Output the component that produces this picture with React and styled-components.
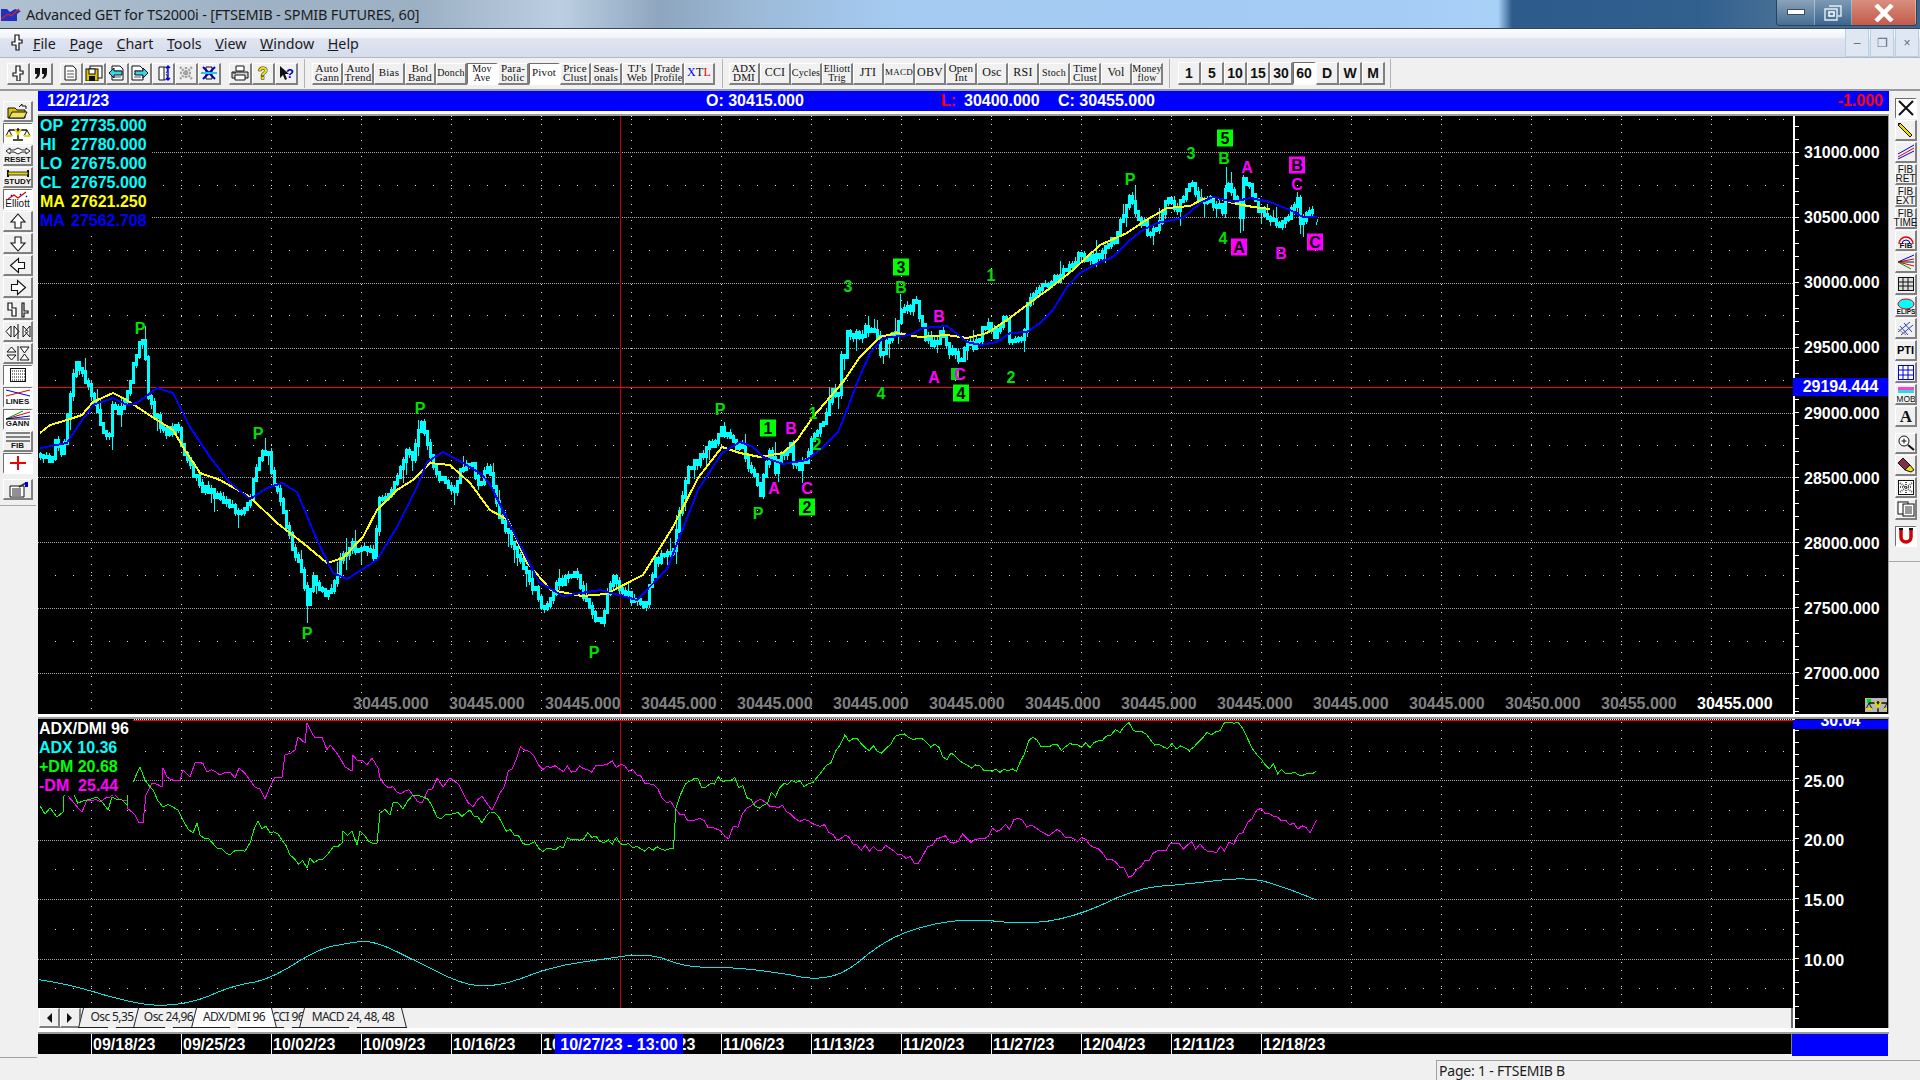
import React from "react";
import styled, { createGlobalStyle } from "styled-components";

const GlobalStyle = createGlobalStyle`
  html, body {
    margin: 0;
    padding: 0;
    background: #f0f0f0;
  }
`;

// ---- chart data, page coordinates ----
const K = 1.2245;
const up = pts => pts.map(([x, y]) => [x * K, y * K]);

const PRICE = [
  [40, 455], [50, 462], [55, 445], [62, 455], [65, 440], [67, 413], [72, 390], [74, 367], [80, 365], [85, 377],
  [90, 393], [96, 410], [103, 430], [108, 440], [112, 410], [122, 412], [127, 393], [133, 363], [140, 343], [144, 340],
  [146, 377], [148, 393], [152, 410], [163, 430], [178, 428], [183, 453], [193, 473], [200, 490], [217, 493], [230, 503],
  [240, 513], [250, 500], [257, 463], [263, 447], [268, 457], [273, 480], [280, 497], [285, 527], [293, 547], [300, 570],
  [307, 600], [312, 580], [320, 587], [327, 597], [335, 580], [343, 553], [352, 543], [358, 553], [367, 547], [373, 557],
  [379, 500], [393, 487], [400, 467], [408, 447], [413, 457], [418, 427], [423, 423], [428, 450], [438, 480], [450, 487],
  [453, 497], [460, 473], [470, 460], [480, 487], [487, 463], [502, 526], [514, 545], [527, 575], [545, 612], [557, 582],
  [575, 575], [588, 606], [600, 624], [612, 575], [630, 600], [645, 606], [655, 563], [673, 551], [686, 471], [704, 453],
  [722, 429], [735, 443], [742, 447], [747, 467], [753, 470], [760, 497], [763, 480], [770, 450], [775, 470], [780, 453],
  [790, 447], [793, 460], [800, 467], [808, 457], [812, 437], [815, 427], [822, 430], [827, 410], [830, 390], [838, 392],
  [840, 357], [845, 358], [847, 330], [855, 337], [865, 330], [875, 333], [882, 360], [885, 340], [895, 337], [900, 315],
  [912, 305], [917, 303], [920, 320], [925, 337], [933, 347], [940, 333], [947, 347], [960, 360], [967, 347], [973, 347],
  [988, 320], [993, 337], [1005, 317], [1010, 343], [1022, 343], [1027, 303], [1033, 297], [1047, 283], [1062, 277], [1067, 263],
  [1080, 257], [1093, 260], [1100, 257], [1113, 240], [1118, 227], [1123, 217], [1130, 197], [1135, 210], [1143, 223], [1150, 237],
  [1158, 230], [1167, 197], [1177, 207], [1187, 193], [1190, 182], [1197, 197], [1207, 200], [1217, 203], [1223, 213], [1226, 180],
  [1237, 200], [1240, 217], [1243, 183], [1248, 185], [1255, 203], [1262, 217], [1273, 220], [1282, 225], [1290, 213], [1297, 203],
  [1300, 223], [1307, 217], [1313, 208],
];

const YELLOW = [
  [40, 433], [50, 425], [67, 420], [82, 415], [93, 402], [113, 393], [127, 400], [137, 407], [157, 420], [173, 430],
  [183, 447], [200, 473], [220, 480], [250, 497], [277, 523], [303, 543], [327, 563], [343, 558], [363, 537], [377, 510],
  [397, 490], [413, 480], [430, 463], [450, 465], [470, 483], [490, 510], [508, 520], [527, 563], [551, 590], [582, 596],
  [606, 594], [643, 575], [673, 527], [698, 478], [722, 447], [740, 453], [760, 457], [783, 453], [797, 440], [813, 417],
  [830, 397], [843, 382], [860, 357], [880, 337], [897, 333], [920, 337], [947, 335], [967, 338], [987, 333], [1007, 320],
  [1027, 305], [1050, 288], [1073, 270], [1100, 245], [1127, 233], [1143, 222], [1167, 208], [1190, 206], [1203, 199], [1217, 198],
  [1233, 203], [1253, 207], [1270, 209],
];

const BLUE = [
  [40, 448], [67, 443], [80, 423], [93, 405], [113, 398], [127, 405], [137, 403], [157, 388], [173, 393], [190, 427],
  [210, 457], [230, 483], [250, 499], [267, 488], [282, 483], [297, 492], [317, 540], [333, 573], [347, 579], [377, 560],
  [397, 527], [417, 487], [427, 462], [443, 452], [463, 463], [480, 473], [490, 484], [514, 533], [539, 582], [563, 596],
  [600, 590], [637, 600], [667, 569], [698, 490], [722, 453], [740, 442], [753, 447], [763, 457], [783, 464], [807, 460],
  [823, 447], [838, 432], [847, 410], [857, 383], [870, 353], [883, 338], [910, 335], [923, 328], [947, 326], [967, 342],
  [980, 345], [997, 342], [1010, 333], [1027, 332], [1040, 323], [1053, 310], [1067, 287], [1080, 273], [1100, 262], [1113, 257],
  [1130, 240], [1143, 230], [1157, 223], [1183, 218], [1200, 203], [1213, 197], [1233, 202], [1250, 198], [1270, 202], [1290, 210],
  [1303, 217], [1317, 217],
];

const PLUS_DM = [
  [40, 806], [45, 814], [50, 808], [57, 817], [63, 812], [64, 796], [87, 800], [97, 797], [108, 810], [112, 797], [127, 805],
  [127, 797], [133, 782], [140, 767], [145, 780], [153, 790], [163, 807], [173, 807], [183, 820], [193, 833], [197, 823],
  [200, 835], [217, 848], [230, 855], [240, 850], [250, 843], [258, 821], [270, 833], [282, 840], [290, 855], [307, 868],
  [310, 858], [322, 860], [333, 847], [342, 843], [343, 831], [352, 831], [357, 845], [360, 831], [377, 843], [380, 813],
  [390, 815], [393, 803], [403, 809], [413, 795], [423, 797], [437, 817], [450, 815], [470, 810], [482, 823], [490, 812],
  [502, 823],
  ...up([
    [420, 682], [430, 690], [450, 693], [480, 680], [510, 690], [550, 693], [552, 660], [560, 640], [580, 640], [600, 635],
    [620, 660], [640, 640], [660, 640], [675, 625], [690, 600], [720, 615], [735, 600], [760, 610], [790, 625], [830, 630],
    [840, 605], [870, 610], [900, 605], [922, 590], [950, 610], [975, 610], [1000, 590], [1015, 595], [1030, 620], [1050, 632],
    [1075, 630],
  ]),
];

const MINUS_DM = [
  [68, 796], [82, 812], [87, 800], [110, 797], [127, 800], [127, 808], [143, 823], [146, 795], [152, 783], [162, 787],
  [163, 768], [167, 777], [180, 780], [183, 770], [190, 777], [195, 763], [199, 762], [207, 772], [220, 775], [230, 772],
  [235, 778], [239, 768], [250, 780], [265, 799], [270, 787], [275, 777], [282, 777], [285, 755], [295, 750], [298, 737],
  [305, 743], [307, 723], [315, 738], [322, 737], [327, 750], [330, 745], [340, 758], [345, 767], [352, 771], [353, 755],
  [362, 760], [367, 765], [372, 758], [378, 768], [380, 778], [397, 792], [413, 795], [422, 803], [428, 790], [437, 778],
  [443, 787], [450, 778], [463, 793], [473, 807], [482, 796], [492, 810], [500, 793],
  ...up([
    [425, 610], [440, 625], [470, 630], [490, 625], [510, 625], [530, 640], [555, 665], [575, 670], [595, 685], [610, 660],
    [625, 655], [660, 670], [700, 690], [730, 695], [750, 705], [765, 685], [800, 685], [835, 670], [860, 680], [890, 690],
    [925, 715], [945, 695], [970, 690], [1000, 695], [1015, 680], [1030, 660], [1050, 670], [1070, 680], [1075, 670],
  ]),
];

const ADX = up([
  [32, 800], [60, 805], [100, 817], [130, 822], [160, 818], [190, 805], [220, 800], [260, 775], [285, 770], [305, 768],
  [340, 785], [380, 805], [410, 805], [450, 790], [480, 785], [530, 778], [560, 790], [600, 790], [640, 795], [665, 800],
  [690, 795], [720, 770], [750, 757], [790, 750], [840, 755], [880, 748], [930, 725], [970, 722], [1020, 716], [1050, 725],
  [1075, 735],
]);

function seeded(a) {
  return () => {
    a = (a + 0x6d2b79f5) | 0;
    let t = Math.imul(a ^ (a >>> 15), 1 | a);
    t = (t + Math.imul(t ^ (t >>> 7), 61 | t)) ^ t;
    return ((t ^ (t >>> 14)) >>> 0) / 4294967296;
  };
}

const line = pts => "M" + pts.map(([x, y]) => `${x.toFixed(1)} ${y.toFixed(1)}`).join("L");

function interp(pts, x) {
  for (let i = 1; i < pts.length; i++) {
    if (x <= pts[i][0]) {
      const [x0, y0] = pts[i - 1];
      const [x1, y1] = pts[i];
      return y0 + ((y1 - y0) * (x - x0)) / Math.max(x1 - x0, 0.01);
    }
  }
  return pts[pts.length - 1][1];
}

function roughen(pts, seed) {
  const rnd = seeded(seed);
  const out = [];
  pts.forEach((p, i) => {
    out.push(p);
    const next = pts[i + 1];
    if (!next) return;
    const n = Math.floor((next[0] - p[0]) / 4);
    for (let k = 1; k < n; k++) {
      const t = k / n;
      out.push([p[0] + (next[0] - p[0]) * t, p[1] + (next[1] - p[1]) * t + (rnd() - 0.5) * 10]);
    }
  });
  return out;
}

function chaikin(pts) {
  const out = [pts[0]];
  for (let i = 0; i < pts.length - 1; i++) {
    const [a, b] = [pts[i], pts[i + 1]];
    out.push([a[0] * 0.75 + b[0] * 0.25, a[1] * 0.75 + b[1] * 0.25]);
    out.push([a[0] * 0.25 + b[0] * 0.75, a[1] * 0.25 + b[1] * 0.75]);
  }
  out.push(pts[pts.length - 1]);
  return out;
}

function buildBars() {
  const rnd = seeded(42);
  let wicks = "";
  let bodies = "";
  let prev = interp(PRICE, 40);
  for (let x = 40; x < 1315; x += 3) {
    const c = interp(PRICE, x) + (rnd() - 0.5) * 9;
    const top = Math.min(prev, c);
    const bot = Math.max(prev, c);
    const hi = top - rnd() * 6 - (rnd() > 0.9 ? 10 : 0);
    const lo = bot + rnd() * 6 + (rnd() > 0.9 ? 10 : 0);
    wicks += `M${x.toFixed(1)} ${hi.toFixed(1)}V${lo.toFixed(1)}`;
    bodies += `M${x.toFixed(1)} ${(top - 2).toFixed(1)}V${(bot + 2).toFixed(1)}`;
    prev = c;
  }
  // the long tails that stand out in the picture
  wicks += "M307 597V623M1226 167V205M1240 217V233M900 294V320M145 326V345M1297 192V212M1316 225L1318 219";
  return { wicks, bodies };
}

const BARS = buildBars();
const GREEN_PATH = line(roughen(PLUS_DM, 7));
const MAGENTA_PATH = line(roughen(MINUS_DM, 11));
const ADX_PATH = line(chaikin(chaikin(ADX)));
const VERTICALS = Array.from({ length: 19 }, (_, i) => 91 + i * 90);

const PRICE_LINES = [152, 217, 283, 348, 413, 477, 542, 608, 673];
const PRICE_ROWS = [119, 185, 250, 315, 380, 445, 510, 575, 641];
const ADX_LINES = [780, 840, 899, 959];
const ADX_ROWS = [751, 810, 869, 929, 988];

const MARKS = [
  [140, 328, "P"], [258, 433, "P"], [307, 633, "P"], [420, 408, "P"], [594, 652, "P"], [720, 409, "P"], [758, 513, "P"],
  [813, 413, "1"], [817, 444, "2"], [848, 286, "3"], [881, 393, "4"], [901, 287, "B"], [991, 275, "1"], [1011, 377, "2"],
  [1130, 179, "P"], [1191, 153, "3"], [1224, 158, "B"], [1223, 238, "4"],
];
const PINK_MARKS = [
  [791, 428, "B"], [774, 488, "A"], [807, 488, "C"], [939, 316, "B"], [934, 377, "A"], [1247, 167, "A"], [1297, 184, "C"], [1281, 253, "B"],
];
const BOXES = [
  [768, 428, "1", "#00ff00"], [807, 507, "2", "#00ff00"], [901, 267, "3", "#00ff00"], [961, 393, "4", "#00ff00"], [1225, 138, "5", "#00ff00"],
  [1297, 165, "B", "#ff00ff"], [1239, 247, "A", "#ff00ff"], [1315, 242, "C", "#ff00ff"],
];

// ---- shell ----
const Frame = styled.div`
  width: 1920px;
  height: 1080px;
  overflow: hidden;
  display: flex;
  flex-direction: column;
  background: #f0f0f0;
  font-family: "Noto Sans", "Liberation Sans", sans-serif;
  color: #1c1c1c;
`;

const TitleBar = styled.div`
  height: 29px;
  box-sizing: border-box;
  flex: none;
  display: flex;
  align-items: flex-start;
  border-bottom: 1px solid #3b4652;
  background: linear-gradient(90deg, #b0c2d2 0, #a0b3c6 240px, #9cb0c4 420px, #bccfe2 560px, #8ea6be 660px, #9dbbd9 760px, #a5cbf2 900px, #a4ccf5 1400px, #a9d1f8 1498px, #2d5b8b 1512px, #31608f 1700px, #476f95 1780px, #3c668e 1920px);
`;

const AppLogo = styled.svg`
  margin: 8px 0 0 1px;
`;

const TitleText = styled.div`
  margin: 4px 0 0 5px;
  font-size: 14.5px;
  line-height: 20px;
  white-space: nowrap;
  letter-spacing: -0.2px;
  flex: 1;
`;

const WinControls = styled.div`
  display: flex;
  height: 25px;
  margin-right: 3px;
  border: 1px solid #2b4258;
  border-top: none;
  border-radius: 0 0 4px 4px;
  overflow: hidden;
`;

const WinButton = styled.div`
  width: ${p => p.$w}px;
  display: flex;
  align-items: center;
  justify-content: center;
  border-right: 1px solid rgba(255, 255, 255, 0.35);
  background: ${p => p.$bg};
`;

const MenuBar = styled.div`
  height: 29px;
  box-sizing: border-box;
  flex: none;
  display: flex;
  align-items: center;
  background: linear-gradient(#fbfcfd 0, #f3f5f9 8px, #dfe4f0 10px, #d5dcec 100%);
  border-bottom: 1px solid #b4b8c0;
`;

const MenuGrip = styled.svg`
  margin: 0 0 0 8px;
`;

const MenuItems = styled.div`
  display: flex;
  gap: 13.5px;
  margin-left: 7px;
  flex: 1;
  font-size: 14.3px;
`;

const MenuItem = styled.span`
  &::first-letter {
    text-decoration: underline;
  }
`;

const MdiButtons = styled.div`
  display: flex;
  gap: 1px;
  margin-right: 1px;
  align-self: stretch;
`;

const MdiButton = styled.div`
  width: 22px;
  display: flex;
  align-items: center;
  justify-content: center;
  background: #dfe7f2;
  border: 1px solid #b9d0e2;
  border-top: none;
  color: #5a6b80;
  font-size: 12px;
  font-family: "Liberation Sans", sans-serif;
`;

const ToolBar = styled.div`
  height: 33px;
  box-sizing: border-box;
  flex: none;
  display: flex;
  align-items: center;
  padding-left: 7px;
  background: #f0f0f0;
  border-bottom: 2px solid #9a9a9a;
`;

const ToolGroup = styled.div`
  display: flex;
  margin-left: ${p => p.$ml || 0}px;
`;

const ToolSep = styled.div`
  width: 1px;
  height: 29px;
  background: #b4b4b4;
  margin-left: ${p => p.$ml}px;
`;

const Bevel = styled.div`
  box-sizing: border-box;
  display: flex;
  flex-direction: column;
  align-items: center;
  justify-content: center;
  border-style: solid;
  border-width: 1px 2px 2px 1px;
  border-color: ${p => (p.$on ? "#6e6e6e #ffffff #ffffff #6e6e6e" : "#ffffff #808080 #808080 #ffffff")};
  background: ${p => (p.$on ? "#ffffff" : "#f0f0f0")};
`;

const IconBtn = styled(Bevel)`
  width: 23px;
  height: 22px;
`;

const TextBtn = styled(Bevel)`
  width: 31px;
  height: 22px;
  font-family: "Liberation Serif", serif;
  font-size: ${p => p.$size || 11}px;
  line-height: 9.5px;
  letter-spacing: 0.2px;
  text-align: center;
  white-space: pre-line;
  color: #111;
`;

const NumBtn = styled(Bevel)`
  width: 23px;
  height: 23px;
  font-family: "Liberation Sans", sans-serif;
  font-size: 14px;
  font-weight: 700;
  color: #111;
`;

const Blue = styled.span`
  color: #0000ff;
`;

const Red = styled.span`
  color: #ff0000;
`;

const Body = styled.div`
  height: 967px;
  flex: none;
  display: flex;
`;

const LeftDock = styled.div`
  width: 36px;
  flex: none;
  height: 966px;
  border-bottom: 1px solid #a0a0a0;
  border-right: 2px solid #f0f0f0;
`;

const LeftTools = styled.div`
  display: flex;
  flex-direction: column;
  gap: 1px;
  padding: 10px 0 5px 3px;
  border-bottom: 1px solid #a8a8a8;
`;

const SideBtn = styled(Bevel)`
  width: 30px;
  height: 21px;
  font-family: "Liberation Sans", sans-serif;
  font-size: ${p => p.$size || 8}px;
  font-weight: ${p => p.$weight || 700};
  line-height: 8px;
  color: #111;
  margin-top: ${p => p.$mt || 0}px;
`;

const Center = styled.div`
  width: 1851px;
  flex: none;
  display: flex;
  flex-direction: column;
`;

const InfoBar = styled.div`
  height: 20px;
  flex: none;
  display: flex;
  align-items: center;
  background: #0000ff;
  color: #fff;
  font: 700 16px "Liberation Sans", sans-serif;
  white-space: pre;
`;

const InfoField = styled.div`
  width: ${p => p.$w}px;
  flex: none;
`;

const InfoChange = styled.div`
  margin-left: auto;
  margin-right: 6px;
  color: #ff0000;
`;

const PaneGap = styled.div`
  height: ${p => p.$h}px;
  box-sizing: border-box;
  flex: none;
  background: #fff;
  border-bottom: 2px solid #9c9c9c;
`;

const PricePane = styled.div`
  height: 598px;
  flex: none;
  display: flex;
`;

const Plot = styled.div`
  position: relative;
  width: 1755px;
  height: ${p => p.$h}px;
  flex: none;
  background: #000;
  overflow: hidden;
`;

const PlotSvg = styled.svg`
  display: block;
`;

const Legend = styled.div`
  position: absolute;
  left: 0;
  top: ${p => p.$top}px;
  padding: ${p => p.$pad};
  background: #000;
  font: 700 16px/${p => p.$lh}px "Liberation Sans", sans-serif;
  white-space: pre;
`;

const LegendRow = styled.div`
  display: flex;
  color: ${p => p.$color};
`;

const LegendKey = styled.span`
  width: 31px;
`;

const GrayScale = styled.div`
  position: absolute;
  left: 315px;
  bottom: 0;
  height: 20px;
  display: flex;
  font: 700 16px/20px "Liberation Sans", sans-serif;
`;

const ScaleCell = styled.span`
  width: 96px;
  color: ${p => (p.$lit ? "#ffffff" : "#808080")};
`;

const Axis = styled.div`
  position: relative;
  width: 96px;
  height: ${p => p.$h}px;
  flex: none;
  box-sizing: border-box;
  background: #000;
  border-right: 1px solid #a0a0a0;
  padding-top: ${p => p.$top}px;
  overflow: hidden;
  font: 700 16px "Liberation Sans", sans-serif;
  color: #fff;
`;

const AxisTicks = styled.svg`
  position: absolute;
  left: 0;
  top: 0;
`;

const AxisRow = styled.div`
  height: ${p => p.$h}px;
  display: flex;
  align-items: center;
  padding-left: ${p => p.$pl}px;
`;

const AxisTag = styled.div`
  position: absolute;
  left: 0;
  top: ${p => p.$top}px;
  width: 95px;
  height: ${p => p.$h}px;
  background: #0000ff;
  color: #fff;
  text-align: center;
  line-height: ${p => p.$lh}px;
`;

const CornerIcon = styled.div`
  position: absolute;
  right: 1px;
  bottom: 2px;
  width: 22px;
  height: 14px;
  background: #b8b8b8;
`;

const LowerPane = styled.div`
  height: 309px;
  flex: none;
  display: flex;
`;

const LowerLeft = styled.div`
  width: 1755px;
  flex: none;
  display: flex;
  flex-direction: column;
`;

const TabRow = styled.div`
  height: 20px;
  display: flex;
  align-items: stretch;
  background: #f0f0f0;
  padding-left: 1px;
  border-right: 2px solid #6a6a6a;
  box-sizing: border-box;
  width: 1755px;
`;

const ScrollBtn = styled(Bevel)`
  width: 21px;
  height: 20px;
`;

const Tabs = styled.div`
  display: flex;
  margin-left: 2px;
`;

const Tab = styled.div`
  position: relative;
  width: ${p => p.$w}px;
  margin-right: -3px;
  text-align: center;
  font-size: 12px;
  line-height: 18px;
  letter-spacing: -0.6px;
  color: #222;
  white-space: nowrap;
  z-index: ${p => (p.$on ? 2 : 1)};

  &::before,
  &::after {
    content: "";
    position: absolute;
    top: 0;
    bottom: 0;
    width: 50%;
    z-index: -1;
    background: ${p => (p.$on ? "#ffffff" : "#f0f0f0")};
    border-bottom: 1px solid #222;
  }

  &::before {
    left: 0;
    border-left: 1px solid #222;
    transform: skewX(-14deg);
    transform-origin: top left;
  }

  &::after {
    right: 0;
    border-right: 1px solid #222;
    transform: skewX(14deg);
    transform-origin: top right;
  }
`;

const TimeRow = styled.div`
  height: 22px;
  flex: none;
  display: flex;
`;

const TimeBar = styled.div`
  position: relative;
  width: 1754px;
  flex: none;
  height: 20px;
  display: flex;
  background: #000;
  padding-left: 53px;
  box-sizing: border-box;
  overflow: hidden;
  font: 700 16px/22px "Liberation Sans", sans-serif;
  color: #fff;
  border-right: 1px solid #808080;
`;

const TimeCell = styled.div`
  width: 90px;
  flex: none;
  box-sizing: border-box;
  padding-left: 1px;
  border-left: 1px solid #fff;
`;

const TimeCursor = styled.div`
  position: absolute;
  left: 517px;
  top: 0;
  width: 128px;
  height: 20px;
  background: #0000ff;
  text-align: center;
  white-space: nowrap;
`;

const TimeEnd = styled.div`
  width: 96px;
  background: #0000ff;
`;

const RightDock = styled.div`
  flex: 1;
  display: flex;
  flex-direction: column;
  gap: 1px;
  padding: 7px 0 0 6px;
  height: 463px;
  border-bottom: 1px solid #a8a8a8;
`;

const DockBtn = styled(Bevel)`
  width: 22px;
  height: 21px;
  font-family: "Liberation Sans", sans-serif;
  font-size: 10px;
  line-height: 9px;
  text-align: center;
  white-space: pre-line;
  color: #111;
  margin-top: ${p => p.$mt || 0}px;
`;

const PtiLabel = styled.span`
  font-size: 11px;
  font-weight: 700;
  color: #000;
`;

const StatusBar = styled.div`
  height: 20px;
  flex: none;
  margin-top: 2px;
  display: flex;
  justify-content: flex-end;
  border-bottom: 1px solid #7e8ea4;
`;

const StatusPane = styled.div`
  width: 484px;
  box-sizing: border-box;
  padding-left: 2px;
  border-top: 1px solid #a0a0a0;
  border-left: 1px solid #a0a0a0;
  font-size: 14px;
  line-height: 19px;
  letter-spacing: -0.2px;
`;

// ---- small drawings ----
const Ico = ({ w = 18, h = 16, children }) => (
  <svg width={w} height={h} viewBox={`0 0 ${w} ${h}`}>
    {children}
  </svg>
);

const Grip = () => (
  <path d="M7 1h4v5h3v3h-3v7h-3v-5H4V8h3z" fill="#fff" stroke="#111" strokeWidth="1.2" />
);
const Doc = ({ x = 3, y = 1 }) => (
  <g>
    <path d={`M${x} ${y}h8l3 3v11h-11z`} fill="#fff" stroke="#111" />
    <path d={`M${x + 2} ${y + 5}h7M${x + 2} ${y + 8}h7M${x + 2} ${y + 11}h7`} stroke="#555" />
  </g>
);
const Scales = () => (
  <g fill="none" stroke="#111">
    <path d="M4 5h18M13 3v11M8 15h10" strokeWidth="1.4" />
    <path d="M4 5l-3 6h6zM22 5l-3 6h6z" />
    <path d="M1 11h6M19 11h6M10 4l3 5 3-5" stroke="#e8d800" strokeWidth="2" />
  </g>
);
const Arrow = ({ rot }) => (
  <path
    d="M10 1l7 8h-4v6H7V9H3z"
    fill="#fff"
    stroke="#111"
    strokeWidth="1.1"
    transform={`rotate(${rot} 10 8.5)`}
  />
);

const TOP_ICONS = [
  [<Grip key="a" />],
  [<path key="a" d="M3 3h5v5c0 3-2 5-4 6l-1-1c1-1 2-2 2-4H3zM10 3h5v5c0 3-2 5-4 6l-1-1c1-1 2-2 2-4h-2z" fill="#111" />],
  null,
  [<Doc key="a" />],
  [
    <rect key="a" x="5" y="1" width="12" height="12" fill="#fff" stroke="#111" />,
    <rect key="b" x="1" y="4" width="12" height="12" fill="#d8c400" stroke="#111" />,
    <rect key="c" x="4" y="4" width="6" height="5" fill="#fff" stroke="#111" />,
    <rect key="d" x="4" y="11" width="6" height="5" fill="#111" />,
  ],
  [<Doc key="a" x={4} />, <path key="b" d="M1 8l5-5v3h8v4H6v3z" fill="#35d6e8" stroke="#111" />],
  [<Doc key="a" x={1} />, <path key="b" d="M17 8l-5-5v3H4v4h8v3z" fill="#35d6e8" stroke="#111" />],
  [
    <path key="a" d="M5 2h5v13H5zM10 2c4 0 4 4 2 6M10 15c4 0 4-4 2-6" fill="#fff" stroke="#111" />,
    <path key="b" d="M14 1v14M12 3l2-2 2 2M12 13l2 2 2-2" fill="none" stroke="#0000e0" strokeWidth="1.4" />,
  ],
  [<path key="a" d="M3 2l12 12M15 2L3 14M3 8h12M9 2v12" stroke="#a0a0a0" strokeWidth="2.4" strokeDasharray="2 1" />],
  [
    <path key="a" d="M3 2l12 12M15 2L3 14" stroke="#0000e0" strokeWidth="2" />,
    <path key="b" d="M6 2h6v12H6z" fill="none" stroke="#111" />,
    <path key="c" d="M1 8h16" stroke="#25c8e0" strokeWidth="2" />,
  ],
  null,
  [
    <path key="a" d="M5 1h8v5H5z" fill="#fff" stroke="#111" />,
    <path key="b" d="M1 7h16v6H1z" fill="#d0d0d0" stroke="#111" />,
    <path key="c" d="M4 10h10v5H4z" fill="#fff" stroke="#111" />,
    <path key="d" d="M2 8h3" stroke="#111" />,
  ],
  [
    <text key="a" x="9" y="14" textAnchor="middle" fontFamily="Liberation Sans" fontWeight="700" fontSize="16" fill="#f4e200" stroke="#111" strokeWidth="1" paintOrder="stroke">?</text>,
  ],
  [
    <path key="a" d="M3 1v12l3-3 2 5 2-1-2-5h4z" fill="#111" />,
    <text key="b" x="13" y="13" textAnchor="middle" fontFamily="Liberation Sans" fontWeight="700" fontSize="13" fill="#0000c0">?</text>,
  ],
];

const TEXT_LEFT = [
  ["Auto\nGann"], ["Auto\nTrend"], ["Bias"], ["Bol\nBand"], ["Donch", 10], ["Mov\nAve", 10, true], ["Para-\nbolic"], ["Pivot", 11, true],
  ["Price\nClust"], ["Seas-\nonals"], ["TJ's\nWeb"], ["Trade\nProfile", 10],
];
const TEXT_RIGHT = [
  ["ADX\nDMI"], ["CCI", 12], ["Cycles", 10], ["Elliott\nTrig", 10], ["JTI", 12], ["MACD", 9], ["OBV", 12], ["Open\nInt"], ["Osc", 12],
  ["RSI", 12], ["Stoch", 10], ["Time\nClust"], ["Vol", 12], ["Money\nflow", 10],
];
const NUMS = ["1", "5", "10", "15", "30", "60", "D", "W", "M"];

const ZigZag = () => (
  <Ico w={24} h={9}>
    <path d="M2 8l6-4 4 3 8-6" fill="none" stroke="#e00000" strokeWidth="1.3" />
    <path d="M5 4l1 1M14 3l1 1M20 5l1 1" stroke="#0000e0" strokeWidth="1.4" />
  </Ico>
);

const LEFT_TOOLS = [
  { icon: <Ico w={24} h={17}><path d="M2 5h7l2 2h8v8H2z" fill="#d8c400" stroke="#111" /><path d="M3 15l3-6h15l-3 6z" fill="#f0e060" stroke="#111" /><path d="M13 4l3-3v2h4v3" fill="none" stroke="#111" /></Ico> },
  { on: true, icon: <Ico w={26} h={17}><Scales /></Ico> },
  { label: "RESET", icon: <Ico w={26} h={9}><path d="M1 4l4-3v2h4l4-2 4 2h4V1l4 3-4 3V5h-4l-4 2-4-2H5v2z" fill="#fff" stroke="#111" strokeWidth=".9" /></Ico> },
  { label: "STUDY", icon: <Ico w={24} h={9}><path d="M2 1v7M22 1v7" stroke="#111" strokeWidth="2" /><rect x="2" y="3" width="20" height="3" fill="#e8d800" stroke="#111" strokeWidth=".8" /></Ico> },
  { label: "Elliott", on: true, size: 10, weight: 400, icon: <ZigZag /> },
  { icon: <Ico w={20} h={17}><Arrow rot={0} /></Ico> },
  { icon: <Ico w={20} h={17}><Arrow rot={180} /></Ico> },
  { icon: <Ico w={20} h={17}><Arrow rot={270} /></Ico> },
  { icon: <Ico w={20} h={17}><Arrow rot={90} /></Ico> },
  { icon: <Ico w={26} h={17}><path d="M3 2h4v5h4v8H7V9H3zM17 2h2v8h4v2h-4v4h-2z" fill="#fff" stroke="#111" strokeWidth="1.2" /></Ico> },
  { icon: <Ico w={26} h={17}><path d="M6 3L1 8.5 6 14zM9 3l5 5.5L9 14zM18 3l5 5.5L18 14zM25 3l-5 5.5 5 5.5z" fill="#fff" stroke="#111" /><path d="M13 1v15" stroke="#111" /></Ico> },
  { icon: <Ico w={26} h={17}><path d="M2 7l4.500-5L11 7zM2 10l4.500 5L11 10zM15 2h9l-4.500 6zM15 15h9l-4.500-6z" fill="#fff" stroke="#111" /><path d="M13 1v15" stroke="#111" /></Ico> },
  { on: true, icon: <Ico w={18} h={16}><rect x="1.500" y="1.500" width="15" height="13" fill="#fff" stroke="#111" /><path d="M1 4h16M1 7h16M1 10h16M1 13h16" stroke="#111" strokeDasharray="1 1" /></Ico> },
  { label: "LINES", on: true, icon: <Ico w={26} h={10}><path d="M1 2l24 6" stroke="#0000e0" /><path d="M1 8l24-6" stroke="#e00000" /></Ico> },
  { label: "GANN", on: true, icon: <Ico w={26} h={10}><path d="M1 9L25 2" stroke="#e00000" /><path d="M1 9L18 1" stroke="#00a000" /><path d="M1 9L25 6" stroke="#0000e0" /><path d="M1 9h24" stroke="#111" /></Ico> },
  { label: "FIB", icon: <Ico w={26} h={10}><path d="M1 1h24M1 5h24M1 9h24" stroke="#111" /></Ico> },
  { on: true, icon: <Ico w={18} h={16}><path d="M9 1v14M1 8h16" stroke="#f00000" strokeWidth="2" /></Ico> },
  { mt: 4, icon: <Ico w={22} h={17}><path d="M3 5h14v11H3z" fill="#fff" stroke="#111" /><path d="M5 8h9M5 10h9M5 12h9M5 14h9" stroke="#222" /><path d="M12 6l7-4" stroke="#333" strokeWidth="2" /><rect x="18" y="1" width="3" height="5" fill="#0000c0" /></Ico> },
];

const RIGHT_TOOLS = [
  { on: true, icon: <Ico w={18} h={16}><path d="M2 1l14 14M16 1L2 15" stroke="#111" strokeWidth="2" /></Ico> },
  { icon: <Ico w={18} h={16}><path d="M3 1l12 12-2 2L1 3z" fill="#f0d800" stroke="#111" /><path d="M1 1h3L1 4z" fill="#111" /></Ico> },
  { icon: <Ico w={18} h={16}><path d="M1 10L17 1" stroke="#0000e0" /><path d="M1 13L17 4" stroke="#e00000" /><path d="M1 15L17 7" stroke="#0000e0" /></Ico> },
  { text: "FIB\nRET" },
  { text: "FIB\nEXT" },
  { text: "FIB\nTIME" },
  { icon: <Ico w={18} h={16}><path d="M2 12a7 7 0 0 1 14 0" fill="none" stroke="#e00000" strokeWidth="1.4" /><path d="M5 12a4 4 0 0 1 8 0" fill="none" stroke="#0000e0" /><text x="9" y="15.500" textAnchor="middle" fontFamily="Liberation Sans" fontSize="8" fontWeight="700" fill="#111">FIB</text></Ico> },
  { icon: <Ico w={18} h={16}><path d="M1 8L17 1" stroke="#0000e0" /><path d="M1 8L17 5" stroke="#e00000" /><path d="M1 8h16" stroke="#111" /><path d="M1 8l16 4" stroke="#e00000" /><path d="M1 8l13 7" stroke="#00a000" /></Ico> },
  { icon: <Ico w={16} h={14}><rect x=".5" y=".5" width="15" height="13" fill="#ddd" stroke="#111" /><path d="M5 0v14M10 0v14M0 5h16M0 9h16" stroke="#111" /></Ico> },
  { icon: <Ico w={18} h={17}><ellipse cx="9" cy="6" rx="8" ry="5" fill="#00ffff" stroke="#e00000" /><text x="9" y="16" textAnchor="middle" fontFamily="Liberation Sans" fontSize="6.500" fontWeight="700" fill="#111">ELIPS</text></Ico> },
  { icon: <Ico w={18} h={16}><path d="M1 12l12-10M4 15l12-10M3 6l8 9M7 3l8 9" stroke="#3040c0" /><path d="M1 9l8 6" stroke="#808080" /></Ico> },
  { pti: true },
  { icon: <Ico w={16} h={15}><rect x=".5" y=".5" width="15" height="14" fill="#fff" stroke="#0000d0" /><path d="M5 0v15M10 0v15M0 5h16M0 10h16" stroke="#0000d0" /></Ico> },
  { icon: <Ico w={18} h={17}><rect x="1" y="1" width="16" height="3" fill="#ff40d0" /><rect x="1" y="4" width="16" height="3" fill="#20e0e0" /><text x="9" y="16" textAnchor="middle" fontFamily="Liberation Sans" fontSize="8.500" fill="#111">MOB</text></Ico> },
  { icon: <Ico w={18} h={16}><text x="9" y="14" textAnchor="middle" fontFamily="Liberation Serif" fontWeight="700" fontSize="17" fill="#111">A</text></Ico> },
  { mt: 5, icon: <Ico w={18} h={16}><circle cx="7" cy="6" r="5" fill="#fff" stroke="#111" /><path d="M4.500 6h5M7 3.500v5" stroke="#111" /><path d="M11 10l6 5" stroke="#111" strokeWidth="2" /></Ico> },
  { icon: <Ico w={18} h={16}><path d="M1 6l5-5 7 7-5 5z" fill="#803040" stroke="#111" /><path d="M8 13l5-5 4 5-3 2z" fill="#f0e000" stroke="#111" /></Ico> },
  { icon: <Ico w={16} h={15}><rect x=".5" y=".5" width="15" height="14" fill="#fff" stroke="#111" /><path d="M2 3l12 9M14 3L2 12M2 7h12M8 2v11" stroke="#555" strokeWidth="2" strokeDasharray="1 1" /></Ico> },
  { icon: <Ico w={18} h={16}><rect x="1" y="1" width="10" height="12" fill="#fff" stroke="#111" /><rect x="6" y="3" width="11" height="12" fill="#fff" stroke="#111" /><path d="M8 6h7M8 8h7M8 10h7M8 12h7" stroke="#333" /></Ico> },
  { mt: 5, on: true, icon: <Ico w={16} h={16}><path d="M3 1v8a5 5 0 0 0 10 0V1" fill="none" stroke="#d00000" strokeWidth="3.500" /><path d="M1 1h4M11 1h4" stroke="#111" strokeWidth="2" /></Ico> },
];

// ---- chart panes ----
const Grid = ({ lines, rows, top, bottom }) => (
  <g>
    {rows.map(y => (
      <line key={y} x1="37" x2="1793" y1={y + 0.5} y2={y + 0.5} stroke="#ddd" strokeDasharray="1 17" />
    ))}
    {lines.map(y => (
      <line key={y} x1="38" x2="1793" y1={y + 0.5} y2={y + 0.5} stroke="#a8a8a8" strokeDasharray="1 1" />
    ))}
    {VERTICALS.map(x => (
      <line key={x} x1={x + 0.5} x2={x + 0.5} y1={top} y2={bottom} stroke="#ddd" strokeDasharray="1 7" />
    ))}
    <line x1="620.500" x2="620.500" y1={top} y2={bottom} stroke="#c00000" />
  </g>
);

const PriceChart = () => (
  <PlotSvg width="1755" height="598" viewBox="38 116 1755 598">
    <Grid lines={PRICE_LINES} rows={PRICE_ROWS} top={116} bottom={714} />
    <line x1="38" x2="1793" y1="387.500" y2="387.500" stroke="#ff0000" />
    <g fill="none" shapeRendering="crispEdges">
      <path d={BARS.wicks} stroke="#00ffff" strokeWidth="1" />
      <path d={BARS.bodies} stroke="#00ffff" strokeWidth="3" />
      <path d={line(YELLOW)} stroke="#ffff00" strokeWidth="2" />
      <path d={line(BLUE)} stroke="#0000ff" strokeWidth="2" />
    </g>
    <rect x="951" y="368" width="8" height="12" fill="#00e000" />
    {BOXES.map(([x, y, t, c]) => (
      <g key={`${x}${t}`}>
        <rect x={x - 8} y={y - 8.500} width="16" height="17" fill={c} />
        <text x={x} y={y + 6} textAnchor="middle" fontFamily="Liberation Sans" fontWeight="700" fontSize="16" fill="#000">{t}</text>
      </g>
    ))}
    {MARKS.map(([x, y, t]) => (
      <text key={`${x}${t}`} x={x} y={y + 6} textAnchor="middle" fontFamily="Liberation Sans" fontWeight="700" fontSize="16" fill="#00e000">{t}</text>
    ))}
    {PINK_MARKS.map(([x, y, t]) => (
      <text key={`${x}${t}`} x={x} y={y + 6} textAnchor="middle" fontFamily="Liberation Sans" fontWeight="700" fontSize="16" fill="#ff00ff">{t}</text>
    ))}
    <text x="960" y="380" textAnchor="middle" fontFamily="Liberation Sans" fontWeight="700" fontSize="16" fill="#ff00ff">C</text>
  </PlotSvg>
);

const IndicatorChart = () => (
  <PlotSvg width="1755" height="289" viewBox="38 719 1755 289">
    <Grid lines={ADX_LINES} rows={ADX_ROWS} top={722} bottom={1008} />
    <line x1="38" x2="1793" y1="719.500" y2="719.500" stroke="#fff" strokeDasharray="1 1" />
    <line x1="38" x2="1793" y1="720.500" y2="720.500" stroke="#ff0000" />
    <g fill="none" shapeRendering="crispEdges">
      <path d={ADX_PATH} stroke="#00e8e8" strokeWidth="1" />
      <path d={MAGENTA_PATH} stroke="#ff00ff" strokeWidth="1" />
      <path d={GREEN_PATH} stroke="#00ff00" strokeWidth="1" />
    </g>
  </PlotSvg>
);

const ticks = (h, start, step) => {
  let d = "";
  for (let y = start; y < h; y += step) d += `M2 ${y}.5h4`;
  return d;
};

const DATES = ["09/18/23", "09/25/23", "10/02/23", "10/09/23", "10/16/23", "10/23/23", "10/30/23", "11/06/23", "11/13/23", "11/20/23", "11/27/23", "12/04/23", "12/11/23", "12/18/23"];
const SCALE = ["30445.000", "30445.000", "30445.000", "30445.000", "30445.000", "30445.000", "30445.000", "30445.000", "30445.000", "30445.000", "30445.000", "30445.000", "30450.000", "30455.000"];
const TABS = [["Osc 5,35", 58], ["Osc 24,96", 61], ["ADX/DMI 96", 76], ["CCI 96", 38], ["MACD 24, 48, 48", 98]];
const MENU = ["File", "Page", "Chart", "Tools", "View", "Window", "Help"];

export default function App() {
  return (
    <Frame>
      <GlobalStyle />
      <TitleBar>
        <AppLogo width="20" height="14" viewBox="0 0 20 14">
          <path d="M0 1h6l3 3 5-3 6 2-4 3v7H0z" fill="#2030c0" />
          <path d="M0 11l7-5 3 2 8-7" fill="none" stroke="#e02020" strokeWidth="1.200" />
        </AppLogo>
        <TitleText>Advanced GET for TS2000i - [FTSEMIB - SPMIB FUTURES, 60]</TitleText>
        <WinControls>
          <WinButton $w={37} $bg="linear-gradient(#8ba3b8, #476f95)">
            <svg width="18" height="7" viewBox="0 0 18 7"><rect x="0.500" y="0.500" width="17" height="5" fill="#fff" stroke="#3a4d60" /></svg>
          </WinButton>
          <WinButton $w={36} $bg="linear-gradient(#7d9ab4, #3c668e)">
            <svg width="18" height="16" viewBox="0 0 18 16"><path d="M5 1h12v10h-3M1 4h12v11H1z" fill="none" stroke="#e8eef4" strokeWidth="1.400" /><rect x="5" y="7" width="5" height="4" fill="none" stroke="#fff" strokeWidth="1.500" /></svg>
          </WinButton>
          <WinButton $w={63} $bg="linear-gradient(#d88f7e, #c45a4c)">
            <svg width="22" height="18" viewBox="0 0 22 18"><path d="M3 1l16 16M19 1L3 17" stroke="#fff" strokeWidth="4.500" /></svg>
          </WinButton>
        </WinControls>
      </TitleBar>

      <MenuBar>
        <MenuGrip width="18" height="18" viewBox="0 0 18 18"><Grip /></MenuGrip>
        <MenuItems>
          {MENU.map(m => <MenuItem key={m}>{m}</MenuItem>)}
        </MenuItems>
        <MdiButtons>
          <MdiButton>–</MdiButton>
          <MdiButton>❐</MdiButton>
          <MdiButton>×</MdiButton>
        </MdiButtons>
      </MenuBar>

      <ToolBar>
        <ToolGroup>
          {TOP_ICONS.slice(0, 2).map((g, i) => <IconBtn key={i}><Ico>{g}</Ico></IconBtn>)}
        </ToolGroup>
        <ToolGroup $ml={7}>
          {TOP_ICONS.slice(3, 10).map((g, i) => <IconBtn key={i}><Ico>{g}</Ico></IconBtn>)}
        </ToolGroup>
        <ToolGroup $ml={8}>
          {TOP_ICONS.slice(11).map((g, i) => <IconBtn key={i}><Ico>{g}</Ico></IconBtn>)}
        </ToolGroup>
        <ToolSep $ml={6} />
        <ToolGroup $ml={7}>
          {TEXT_LEFT.map(([t, s, on]) => <TextBtn key={t} $size={s} $on={on}>{t}</TextBtn>)}
          <TextBtn $size={12}><span><Blue>X</Blue>T<Red>L</Red></span></TextBtn>
        </ToolGroup>
        <ToolSep $ml={7} />
        <ToolGroup $ml={6}>
          {TEXT_RIGHT.map(([t, s]) => <TextBtn key={t} $size={s}>{t}</TextBtn>)}
        </ToolGroup>
        <ToolSep $ml={6} />
        <ToolGroup $ml={8}>
          {NUMS.map(n => <NumBtn key={n} $on={n === "60"}>{n}</NumBtn>)}
        </ToolGroup>
        <ToolSep $ml={5} />
      </ToolBar>

      <Body>
        <LeftDock>
          <LeftTools>
            {LEFT_TOOLS.map((t, i) => (
              <SideBtn key={i} $on={t.on} $mt={t.mt} $size={t.size} $weight={t.weight}>
                {t.icon}
                {t.label}
              </SideBtn>
            ))}
          </LeftTools>
        </LeftDock>

        <Center>
          <InfoBar>
            <InfoField $w={668}>  12/21/23</InfoField>
            <InfoField $w={235}>O: 30415.000</InfoField>
            <InfoField $w={23}><Red>L:</Red></InfoField>
            <InfoField $w={94}>30400.000</InfoField>
            <InfoField $w={120}>C: 30455.000</InfoField>
            <InfoChange>-1.000</InfoChange>
          </InfoBar>
          <PaneGap $h={5} />
          <PricePane>
            <Plot $h={598}>
              <PriceChart />
              <Legend $top={0} $pad="0 4px 2px 2px" $lh={19}>
                <LegendRow $color="#00ffff"><LegendKey>OP</LegendKey>27735.000</LegendRow>
                <LegendRow $color="#00ffff"><LegendKey>HI</LegendKey>27780.000</LegendRow>
                <LegendRow $color="#00ffff"><LegendKey>LO</LegendKey>27675.000</LegendRow>
                <LegendRow $color="#00ffff"><LegendKey>CL</LegendKey>27675.000</LegendRow>
                <LegendRow $color="#ffff00"><LegendKey>MA</LegendKey>27621.250</LegendRow>
                <LegendRow $color="#0000ff"><LegendKey>MA</LegendKey>27562.708</LegendRow>
              </Legend>
              <GrayScale>
                {SCALE.map((s, i) => <ScaleCell key={i}>{s}</ScaleCell>)}
                <ScaleCell $lit>30455.000</ScaleCell>
              </GrayScale>
            </Plot>
            <Axis $h={598} $top={4.5}>
              <AxisTicks width="10" height="598" viewBox="0 0 10 598">
                <path d="M1 0v598" stroke="#fff" strokeWidth="2" />
                <path d={ticks(598, 10, 13)} stroke="#fff" />
              </AxisTicks>
              {["31000.000", "30500.000", "30000.000", "29500.000", "29000.000", "28500.000", "28000.000", "27500.000", "27000.000"].map(v => (
                <AxisRow key={v} $h={65.15} $pl={11}>{v}</AxisRow>
              ))}
              <AxisTag $top={262} $h={18} $lh={18}>29194.444</AxisTag>
              <CornerIcon>
                <Ico w={22} h={14}>
                  <rect x="2" y="1" width="4" height="4" fill="#00e000" />
                  <Scales />
                </Ico>
              </CornerIcon>
            </Axis>
          </PricePane>
          <PaneGap $h={5} />
          <LowerPane>
            <LowerLeft>
              <Plot $h={289}>
                <IndicatorChart />
                <Legend $top={0} $pad="0 4px 0 1px" $lh={19}>
                  <LegendRow $color="#ffffff">ADX/DMI 96</LegendRow>
                  <LegendRow $color="#00ffff">ADX 10.36</LegendRow>
                  <LegendRow $color="#00ff00">+DM 20.68</LegendRow>
                  <LegendRow $color="#ff00ff">-DM  25.44</LegendRow>
                </Legend>
              </Plot>
              <TabRow>
                <ScrollBtn><Ico w={8} h={12}><path d="M7 1L2 6l5 5z" fill="#111" /></Ico></ScrollBtn>
                <ScrollBtn><Ico w={8} h={12}><path d="M1 1l5 5-5 5z" fill="#111" /></Ico></ScrollBtn>
                <Tabs>
                  {TABS.map(([t, w]) => <Tab key={t} $w={w} $on={t === "ADX/DMI 96"}>{t}</Tab>)}
                </Tabs>
              </TabRow>
            </LowerLeft>
            <Axis $h={309} $top={33}>
              <AxisTicks width="10" height="309" viewBox="0 0 10 309">
                <path d="M1 0v309" stroke="#fff" strokeWidth="2" />
                <path d={ticks(309, 11, 12)} stroke="#fff" />
              </AxisTicks>
              {["25.00", "20.00", "15.00", "10.00"].map(v => (
                <AxisRow key={v} $h={59.6} $pl={11}>{v}</AxisRow>
              ))}
              <AxisTag $top={1} $h={9} $lh={1}>30.04</AxisTag>
            </Axis>
          </LowerPane>
          <PaneGap $h={6} />
          <TimeRow>
            <TimeBar>
              {DATES.map(d => <TimeCell key={d}>{d}</TimeCell>)}
              <TimeCursor>10/27/23 - 13:00</TimeCursor>
            </TimeBar>
            <TimeEnd />
          </TimeRow>
        </Center>

        <RightDock>
          {RIGHT_TOOLS.map((t, i) => (
            <DockBtn key={i} $on={t.on} $mt={t.mt}>
              {t.icon}
              {t.text}
              {t.pti && <PtiLabel>PTI</PtiLabel>}
            </DockBtn>
          ))}
        </RightDock>
      </Body>

      <StatusBar>
        <StatusPane>Page: 1 - FTSEMIB B</StatusPane>
      </StatusBar>
    </Frame>
  );
}
